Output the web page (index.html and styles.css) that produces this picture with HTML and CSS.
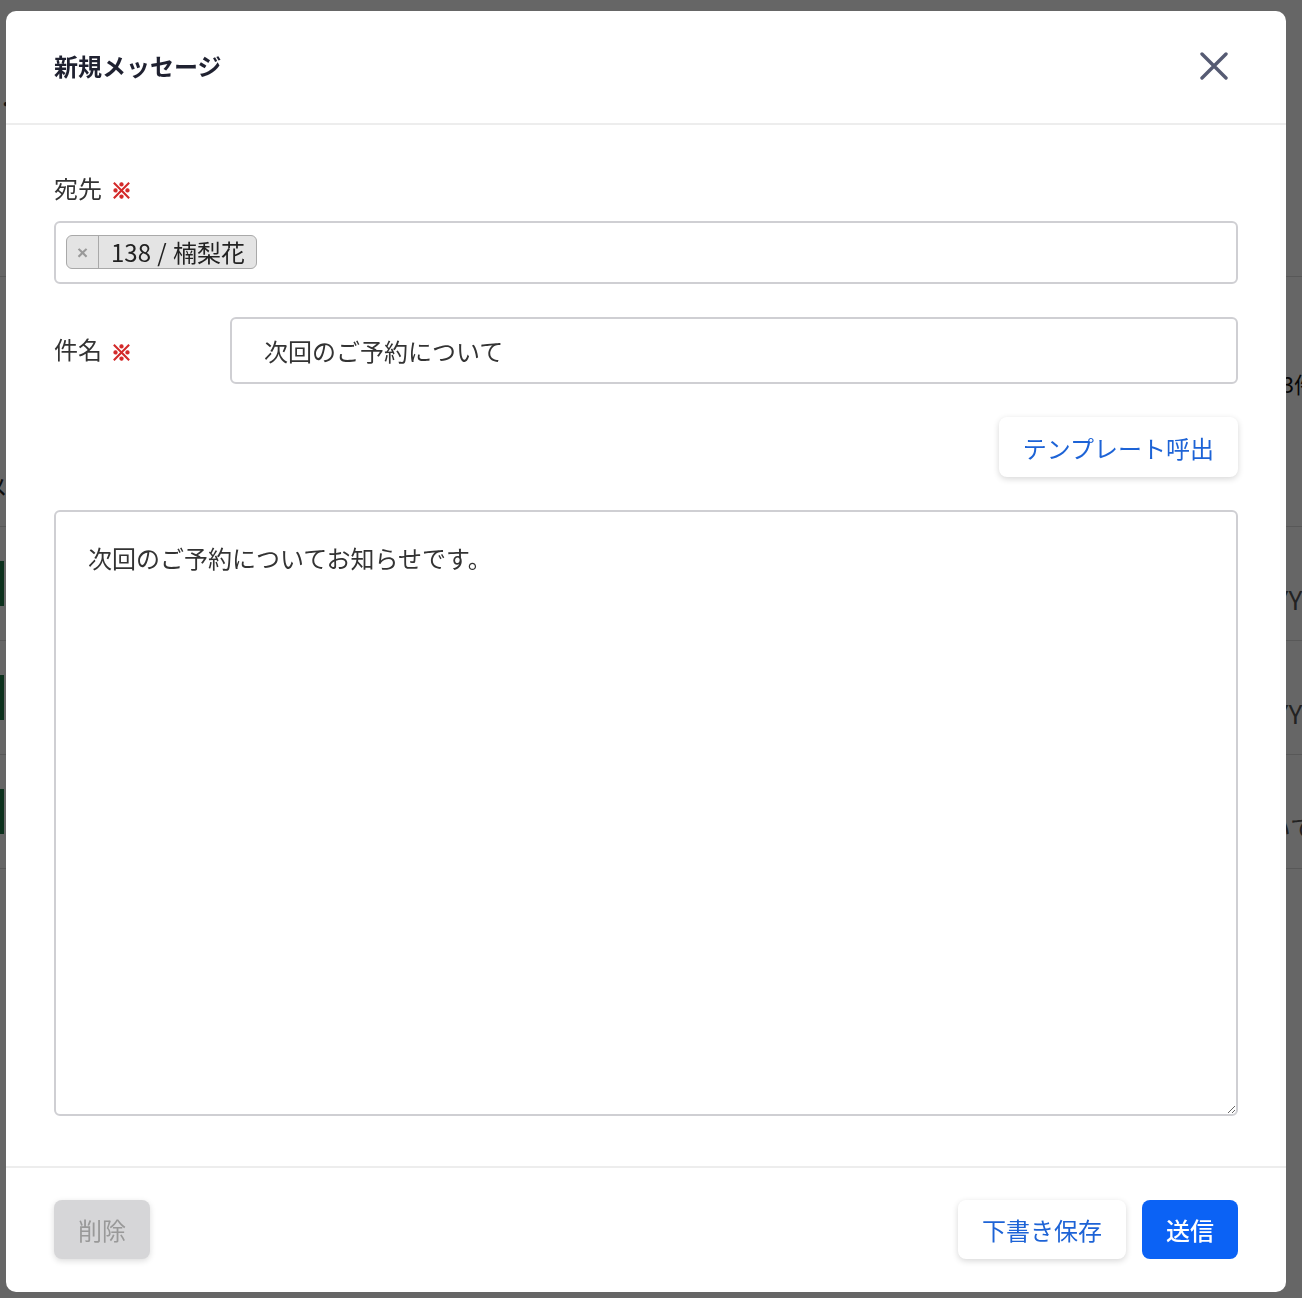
FILE: index.html
```html
<!DOCTYPE html>
<html lang="ja">
<head>
  <meta charset="UTF-8">
  <meta name="viewport" content="width=device-width, initial-scale=1.0">
  <title>新規メッセージ</title>
  <link rel="stylesheet" href="styles.css">
</head>
<body>
  <!-- page behind the dialog -->
  <div class="page">
    <div class="page-head">
      <span class="page-dot">・</span>
      <div class="page-summary">
        <span class="page-count">未送信 3件</span>
      </div>
      <span class="page-heading">メッセージ一覧</span>
    </div>
    <ul class="list">
      <li class="row"><span class="badge">予約</span><span class="row-text">YYYY</span></li>
      <li class="row"><span class="badge">予約</span><span class="row-text">YYYY</span></li>
      <li class="row"><span class="badge">予約</span><span class="row-text">について</span></li>
    </ul>
  </div>

  <div class="backdrop">
    <div class="modal">
      <header class="modal-header">
        <h2 class="modal-title">新規メッセージ</h2>
        <button type="button" class="close" aria-label="閉じる">
          <svg width="28" height="28" viewBox="0 0 28 28">
            <path d="M2 2 L26 26 M26 2 L2 26" stroke="#565b73" stroke-width="3.4" stroke-linecap="round" fill="none"/>
          </svg>
        </button>
      </header>

      <div class="modal-body">
        <div class="field">
          <label class="label">宛先<span class="req">※</span></label>
          <div class="tags-input">
            <span class="tag">
              <span class="tag-remove">×</span>
              <span class="tag-label">138 / 楠梨花</span>
            </span>
          </div>
        </div>

        <div class="field-row">
          <label class="label label-side">件名<span class="req">※</span></label>
          <input type="text" class="text-input" value="次回のご予約について">
        </div>

        <div class="tools">
          <button type="button" class="btn btn-white">テンプレート呼出</button>
        </div>

        <textarea class="message">次回のご予約についてお知らせです。</textarea>
      </div>

      <footer class="modal-footer">
        <button type="button" class="btn btn-disabled">削除</button>
        <div class="actions">
          <button type="button" class="btn btn-white">下書き保存</button>
          <button type="button" class="btn btn-primary">送信</button>
        </div>
      </footer>
    </div>
  </div>
</body>
</html>
```

FILE: styles.css
```css
*{
  margin: 0;
  padding: 0;
  box-sizing: border-box;
}
body{
  background-color: #fff;
  font-family: "Noto Sans CJK JP", "Noto Sans", sans-serif;
  color: #333;
  height: 1298px;
  overflow: hidden;
}

/* page under the overlay */
.page{
  margin-left: -56px;
  margin-right: -14px;
}
.page-head{
  height: 527px;
  padding-top: 92px;
  display: flex;
  flex-direction: column;
  border-bottom: 1px solid #ddd;
}
.page-dot{
  font-size: 20px;
  line-height: 24px;
  margin-left: 52px;
}
.page-summary{
  margin-top: 160px;
  display: flex;
  justify-content: flex-end;
  border-top: 1px solid #ddd;
  padding-top: 90px;
}
.page-count{
  font-size: 22px;
  color: #111;
}
.page-heading{
  margin-top: 70px;
  font-size: 24px;
  color: #222;
  margin-left: 40px;
}
.list{
  list-style: none;
}
.row{
  height: 114px;
  border-bottom: 1px solid #ddd;
  display: flex;
  align-items: center;
  justify-content: space-between;
}
.badge{
  background-color: #1f7a4a;
  color: #fff;
  font-size: 20px;
  padding: 8px 10px;
}
.row-text{
  font-size: 26px;
  color: #555;
  margin-top: 30px;
}

/* overlay + dialog */
.backdrop{
  position: fixed;
  top: 0;
  left: 0;
  right: 0;
  bottom: 0;
  background-color: rgba(0, 0, 0, 0.6);
  padding: 11px 16px 0 6px;
}
.modal{
  width: 1280px;
  background-color: #fff;
  border-radius: 10px;
}
.modal-header{
  height: 114px;
  padding: 0 48px 3px 48px;
  display: flex;
  align-items: center;
  justify-content: space-between;
  border-bottom: 2px solid #ededed;
}
.modal-title{
  font-size: 24px;
  font-weight: 700;
  color: #1f2130;
}
.close{
  border: none;
  background: none;
  padding: 10px;
  display: flex;
  cursor: pointer;
}

.modal-body{
  padding: 46px 48px 50px 48px;
}
.label{
  display: flex;
  align-items: center;
  height: 36px;
  padding-bottom: 4px;
  font-size: 24px;
  color: #333;
}
.req{
  color: #d32a2a;
  font-size: 21px;
  font-weight: 900;
  -webkit-text-stroke: 1.2px #d32a2a;
  margin-left: 9px;
  margin-top: 4px;
}
.tags-input{
  margin-top: 14px;
  height: 63px;
  border: 2px solid #cfcfd3;
  border-radius: 6px;
  padding: 0 10px;
  display: flex;
  align-items: center;
}
.tag{
  display: inline-flex;
  align-items: stretch;
  height: 34px;
  background-color: #e4e4e4;
  border: 1.5px solid #a9a9a9;
  border-radius: 6px;
  margin-top: -2px;
}
.tag-remove{
  width: 32px;
  display: flex;
  align-items: center;
  justify-content: center;
  border-right: 1.5px solid #a9a9a9;
  color: #999;
  font-family: "Liberation Sans", sans-serif;
  font-size: 19px;
  font-weight: 700;
  padding-top: 2px;
}
.tag-label{
  display: flex;
  align-items: center;
  padding: 0 11px 0 12px;
  font-size: 24px;
  color: #222;
  word-spacing: 1px;
}

.field-row{
  margin-top: 33px;
  display: flex;
  align-items: center;
}
.label-side{
  width: 176px;
  flex-shrink: 0;
}
.text-input{
  flex: 1;
  height: 67px;
  border: 2px solid #cfcfd3;
  border-radius: 6px;
  padding: 0 32px;
  font-family: inherit;
  font-size: 24px;
  color: #333;
  outline: none;
}

.tools{
  margin-top: 33px;
  display: flex;
  justify-content: flex-end;
}
.btn{
  height: 60px;
  padding: 0 24px;
  border: none;
  border-radius: 8px;
  font-family: inherit;
  font-size: 24px;
  cursor: pointer;
}
.btn-white{
  background-color: #fff;
  color: #1d63d6;
  box-shadow: 0 2px 6px rgba(0, 0, 0, 0.16);
}
.btn-primary{
  background-color: #0b62f5;
  color: #fff;
  font-weight: 500;
}
.btn-disabled{
  background-color: #d6d6d8;
  color: #999;
  box-shadow: 0 2px 6px rgba(0, 0, 0, 0.14);
}

.message{
  display: block;
  margin-top: 33px;
  width: 100%;
  height: 606px;
  border: 2px solid #cfcfd3;
  border-radius: 6px;
  padding: 28px 32px;
  font-family: inherit;
  font-size: 24px;
  line-height: 36px;
  color: #333;
  outline: none;
}

.modal-footer{
  border-top: 2px solid #ededed;
  padding: 32px 48px 33px 48px;
  display: flex;
  justify-content: space-between;
  align-items: center;
}
.modal-footer .btn{
  height: 59px;
}
.actions{
  display: flex;
  gap: 16px;
}
```
